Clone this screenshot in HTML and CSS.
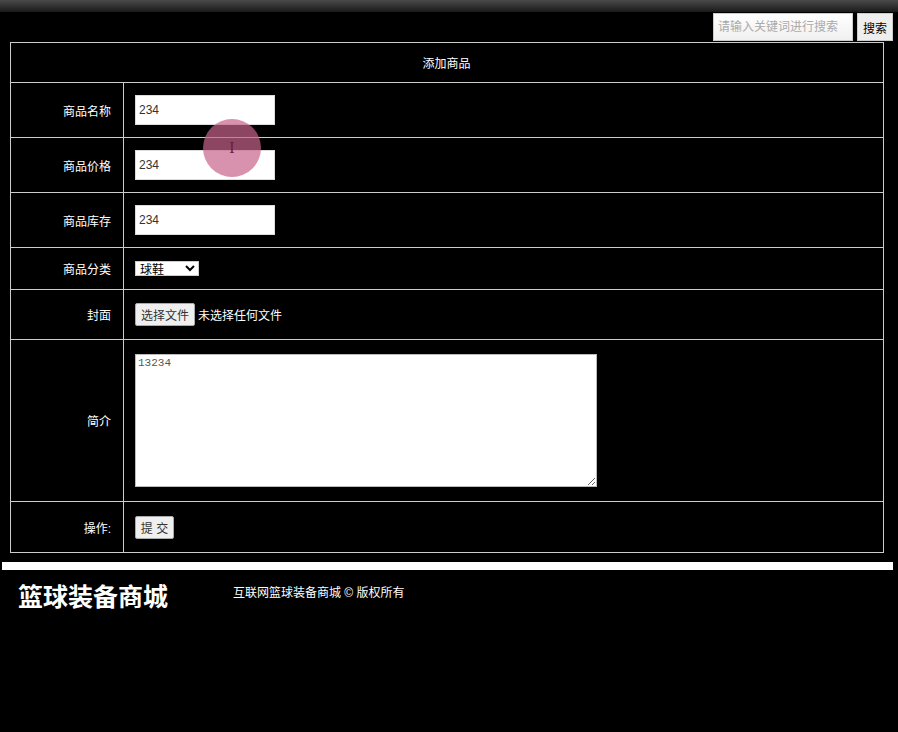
FILE: index.html
```html
<!DOCTYPE html>
<html lang="zh-CN">
<head>
    <meta charset="UTF-8">
    <meta name="viewport" content="width=device-width, initial-scale=1.0">
    <title>添加商品</title>
    <link rel="stylesheet" href="styles.css">
</head>
<body>
    <!-- 顶部条 -->
    <div class="topbar"></div>

    <!-- 搜索 -->
    <div class="search">
        <input class="search-input" type="text" placeholder="请输入关键词进行搜索">
        <button class="search-btn">搜索</button>
    </div>

    <!-- 添加商品表单 -->
    <form class="goods-form" action="javascript:;">
        <table class="goods-table">
            <tr class="row-head">
                <td colspan="2">添加商品</td>
            </tr>
            <tr class="row-input">
                <td class="label">商品名称</td>
                <td><input class="txt" type="text" value="234"></td>
            </tr>
            <tr class="row-input">
                <td class="label">商品价格</td>
                <td><input class="txt" type="text" value="234"></td>
            </tr>
            <tr class="row-input">
                <td class="label">商品库存</td>
                <td><input class="txt" type="text" value="234"></td>
            </tr>
            <tr class="row-select">
                <td class="label">商品分类</td>
                <td>
                    <select class="sel">
                        <option>球鞋</option>
                        <option>球衣</option>
                        <option>篮球</option>
                    </select>
                </td>
            </tr>
            <tr class="row-file">
                <td class="label">封面</td>
                <td>
                    <label class="file">
                        <input type="file">
                        <span class="file-btn">选择文件</span>
                        <span class="file-name">未选择任何文件</span>
                    </label>
                </td>
            </tr>
            <tr class="row-intro">
                <td class="label">简介</td>
                <td><textarea class="intro">13234</textarea></td>
            </tr>
            <tr class="row-op">
                <td class="label">操作:</td>
                <td><button class="submit" type="submit">提 交</button></td>
            </tr>
        </table>
    </form>

    <div class="line"></div>

    <!-- 底部 -->
    <div class="footer">
        <h2 class="footer-title">篮球装备商城</h2>
        <p class="footer-copy">互联网篮球装备商城 © 版权所有</p>
    </div>

    <!-- 鼠标点击提示 -->
    <div class="cursor-dot"><span>I</span></div>
</body>
</html>
```
FILE: styles.css
```css
*{
    margin: 0;
    padding: 0;
    box-sizing: border-box;
}
body{
    background-color: #000;
    color: #fff;
    font-family: "Liberation Sans", "Noto Sans CJK SC", sans-serif;
    font-size: 12px;
    position: relative;
}
.topbar{
    height: 12px;
    background: linear-gradient(#4a4a4a, #1a1a1a);
}

/* 搜索框靠右 */
.search{
    display: flex;
    justify-content: flex-end;
    gap: 4px;
    padding: 1px 5px 0 0;
    height: 30px;
}
.search-input{
    width: 140px;
    height: 28px;
    border: 1px solid #ccc;
    background: linear-gradient(#fff, #f0f0f0);
    padding-left: 4px;
    font-family: inherit;
    font-size: 12px;
    outline: none;
}
.search-input::placeholder{
    color: #aaa;
}
.search-btn{
    width: 36px;
    height: 28px;
    border: 1px solid #ccc;
    background-color: #eee;
    color: #000;
    font-family: inherit;
    font-size: 12px;
}

.goods-form{
    padding-left: 10px;
}
.goods-table{
    width: 874px;
    border-collapse: collapse;
}
.goods-table td{
    border: 1px solid #ccc;
    padding: 0 12px 0 11px;
    vertical-align: middle;
}
.goods-table td.label{
    width: 113px;
    text-align: right;
    padding-right: 12px;
}
.row-head td{
    height: 40px;
    text-align: center;
}
.row-input td{
    height: 55px;
}
.row-select td{
    height: 42px;
}
.row-file td{
    height: 50px;
}
.row-intro td{
    height: 162px;
}
.row-op td{
    height: 51px;
}

.txt{
    width: 140px;
    height: 30px;
    border: 1px solid #ddd;
    padding-left: 3px;
    font-family: inherit;
    font-size: 12px;
    color: #333;
    outline: none;
}
.sel{
    width: 64px;
    height: 15px;
    font-family: inherit;
    font-size: 12px;
    border: 1px solid #ccc;
    background: #fff;
    color: #000;
}

/* 文件选择：隐藏原生控件，用 span 模拟 */
.file{
    display: flex;
    align-items: center;
    gap: 3px;
}
.file input{
    display: none;
}
.file-btn{
    display: inline-block;
    padding: 2px 5px;
    background-color: #efefef;
    border: 1px solid #aaa;
    border-radius: 2px;
    color: #333;
}

.intro{
    display: block;
    width: 462px;
    height: 133px;
    border: 1px solid #bbb;
    padding: 2px;
    font-family: "Liberation Mono", monospace;
    font-size: 11px;
    color: #555;
}
.submit{
    width: 39px;
    height: 23px;
    border: 1px solid #aaa;
    border-radius: 2px;
    background-color: #efefef;
    font-family: inherit;
    font-size: 12px;
    color: #333;
}

.line{
    height: 8px;
    margin: 9px 5px 0 2px;
    background-color: #fff;
}

.footer{
    display: flex;
    align-items: flex-start;
    padding: 12px 0 0 18px;
}
.footer-title{
    width: 215px;
    font-size: 25px;
    line-height: 30px;
    font-weight: bold;
}
.footer-copy{
    font-size: 12px;
    line-height: 16px;
    margin-top: 3px;
}

/* 录屏时的鼠标提示圈 */
.cursor-dot{
    position: absolute;
    left: 203px;
    top: 119px;
    width: 58px;
    height: 58px;
    border-radius: 50%;
    background-color: rgba(200, 100, 140, 0.7);
    display: flex;
    align-items: center;
    justify-content: center;
    color: #6a2040;
    font-family: "Liberation Serif", serif;
    font-size: 16px;
}
```
